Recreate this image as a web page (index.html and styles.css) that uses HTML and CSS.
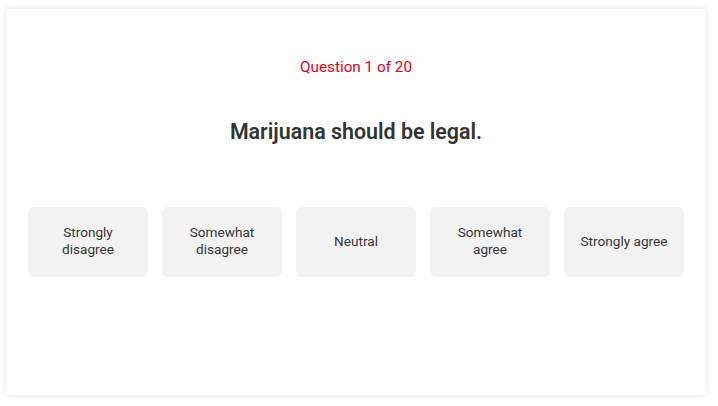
FILE: index.html
```html
<!DOCTYPE html>
<html>
<head>
<meta charset="utf-8">
<link rel="stylesheet" href="styles.css">
</head>
<body>
<div class="page">
  <div class="card">
    <div class="counter">Question 1 of 20</div>
    <h1 class="question">Marijuana should be legal.</h1>
    <div class="options">
      <button class="option">Strongly<br>disagree</button>
      <button class="option">Somewhat<br>disagree</button>
      <button class="option">Neutral</button>
      <button class="option">Somewhat<br>agree</button>
      <button class="option">Strongly agree</button>
    </div>
  </div>
</div>
</body>
</html>
```
FILE: styles.css
```css
html, body {
  margin: 0;
  padding: 0;
  background: #ffffff;
}
.page {
  padding: 9px 12px 11px 6px;
  font-family: "Roboto", "Liberation Sans", sans-serif;
}
.card {
  box-sizing: border-box;
  width: 700px;
  height: 386px;
  background: #fff;
  border-radius: 4px;
  box-shadow: 0 0 6px rgba(0,0,0,0.12);
  padding: 48px 22px 0;
}
.counter {
  text-align: center;
  color: #e2001a;
  font-size: 15.3px;
  line-height: 20px;
}
.question {
  margin: 42px 0 0;
  text-align: center;
  color: #333;
  font-size: 21.4px;
  font-weight: 600;
  line-height: 26px;
}
.options {
  display: flex;
  gap: 14px;
  margin-top: 62px;
}
.option {
  width: 120px;
  height: 70px;
  border: none;
  border-radius: 6px;
  background: #f2f2f2;
  color: #363636;
  font-family: inherit;
  font-size: 13.6px;
  line-height: 17px;
  padding: 0 0 2px;
  display: flex;
  align-items: center;
  justify-content: center;
  text-align: center;
}
```
